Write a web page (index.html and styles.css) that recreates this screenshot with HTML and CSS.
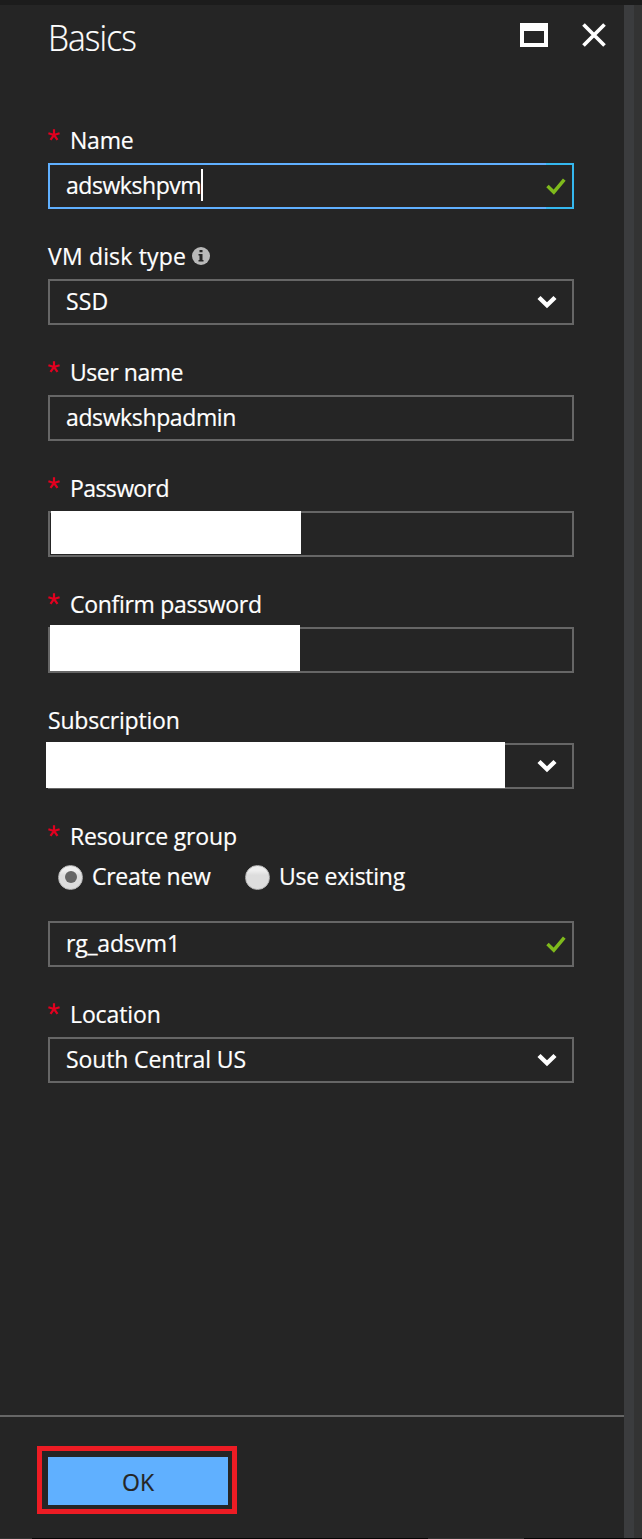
FILE: index.html
```html
<!DOCTYPE html>
<html lang="en">
<head>
<meta charset="utf-8">
<title>Basics</title>
<link rel="stylesheet" href="styles.css">
</head>
<body>
<svg class="defs" width="0" height="0">
  <symbol id="star" viewBox="0 0 12 12"><path d="M6 6V0.2M6 6L0.4 4.2M6 6L11.6 4.2M6 6L2.5 10.8M6 6L9.5 10.8" fill="none" stroke="#e2001f" stroke-width="2.2"/></symbol>
  <symbol id="check" viewBox="0 0 20 17"><path d="M1.5 8L7.8 14.2L18.3 1.7" fill="none" stroke="#7fba1c" stroke-width="3.5"/></symbol>
  <symbol id="chevron" viewBox="0 0 20 14"><path d="M2 2.5L10 10.3L18 2.5" fill="none" stroke="#fff" stroke-width="4.4"/></symbol>
</svg>
<div class="page">
  <div class="topbar"></div>
  <div class="main">
    <section class="blade">
      <header class="header">
        <h1 class="title">Basics</h1>
        <div class="actions">
          <svg width="28" height="24" viewBox="0 0 28 24"><path d="M0 0H28V24H0ZM4 8V20H24V8Z" fill="#fff" fill-rule="evenodd"/></svg>
          <svg width="24" height="24" viewBox="0 0 24 24"><path d="M1.5 1.5L22.5 22.5M22.5 1.5L1.5 22.5" stroke="#fff" stroke-width="3.7"/></svg>
        </div>
      </header>
      <form class="form">
        <div class="group">
          <div class="label"><svg class="star"><use href="#star"/></svg><span class="t-name">Name</span></div>
          <div class="field focused"><span class="t-vm">adswkshpvm</span><i class="caret"></i><svg class="check"><use href="#check"/></svg></div>
        </div>
        <div class="group">
          <div class="label"><span class="t-disk">VM disk type</span><svg class="info" viewBox="0 0 18 18"><circle cx="9" cy="9" r="9" fill="#b9b9b9"/><path d="M7.5 3h3v2.3h-3zM6.5 7h4v6h1v1.5h-5V13h1V8.5h-1z" fill="#252525"/></svg></div>
          <div class="field"><span class="t-ssd">SSD</span><svg class="chevron"><use href="#chevron"/></svg></div>
        </div>
        <div class="group">
          <div class="label"><svg class="star"><use href="#star"/></svg><span class="t-user">User name</span></div>
          <div class="field"><span class="t-admin">adswkshpadmin</span></div>
        </div>
        <div class="group">
          <div class="label"><svg class="star"><use href="#star"/></svg><span class="t-pass">Password</span></div>
          <div class="field"><i class="mask mask-password"></i></div>
        </div>
        <div class="group">
          <div class="label"><svg class="star"><use href="#star"/></svg><span class="t-confirm">Confirm password</span></div>
          <div class="field"><i class="mask mask-confirm"></i></div>
        </div>
        <div class="group">
          <div class="label"><span class="t-sub">Subscription</span></div>
          <div class="field"><i class="mask mask-subscription"></i><svg class="chevron"><use href="#chevron"/></svg></div>
        </div>
        <div class="group">
          <div class="label"><svg class="star"><use href="#star"/></svg><span class="t-group">Resource group</span></div>
          <div class="radios">
            <span class="radio selected"></span><span class="option t-create">Create new</span>
            <span class="radio"></span><span class="option t-existing">Use existing</span>
          </div>
          <div class="field"><span class="t-rg">rg_adsvm1</span><svg class="check"><use href="#check"/></svg></div>
        </div>
        <div class="group">
          <div class="label"><svg class="star"><use href="#star"/></svg><span class="t-loc">Location</span></div>
          <div class="field"><span class="t-south">South Central US</span><svg class="chevron"><use href="#chevron"/></svg></div>
        </div>
      </form>
      <footer class="footer">
        <div class="highlight"><button class="ok">OK</button></div>
      </footer>
    </section>
    <div class="divider"></div>
    <div class="gutter"></div>
  </div>
  <div class="bottombar"></div>
</div>
</body>
</html>
```

FILE: styles.css
```css
* { box-sizing: border-box; }
body { margin: 0; background: #252525; color: #fff; font-family: "Open Sans", "Noto Sans", sans-serif; font-size: 23px; line-height: 32px; -webkit-text-stroke: 0.2px; }
svg { display: block; flex: none; }
.defs { position: absolute; }
.page { width: 642px; height: 1539px; display: flex; flex-direction: column; overflow: hidden; }
.topbar { height: 5px; background: #1c1c1c; }
.main { flex: 1; display: flex; min-height: 0; }
.blade { width: 624px; display: flex; flex-direction: column; background: #252525; }
.divider { width: 10px; background: #3b3c3e; }
.gutter { width: 8px; background: #333; }
.bottombar { height: 1px; background: linear-gradient(90deg, #333 32px, #050505 32px 428px, #333 428px 524px, #050505 524px); }
.header { height: 119px; padding: 8px 18px 0 48px; display: flex; justify-content: space-between; }
.title { margin: 0; font-size: 36px; line-height: 50px; font-weight: 300; letter-spacing: -1px; transform: scaleX(0.93); transform-origin: left; }
.actions { display: flex; gap: 34px; padding-top: 10px; }
.form { flex: 1; padding: 0 50px 0 48px; }
.group { margin-bottom: 31px; }
.label { height: 32px; margin-bottom: 7px; display: flex; align-items: flex-start; white-space: nowrap; }
.star { width: 12px; height: 12px; margin: 5px 10px 0 0; }
.info { width: 18px; height: 18px; margin: 7px 0 0 6px; }
.field { position: relative; height: 46px; border: 2px solid #666; padding: 0 6px 0 16px; display: flex; align-items: center; white-space: nowrap; }
.field > span { padding-bottom: 2px; }
.field.focused { border-image: linear-gradient(90deg, #60b0ff 498px, #35b8ef 498px) 2; }
.caret { width: 2px; height: 32px; margin-bottom: 2px; background: #fff; }
.check { width: 20px; height: 17px; margin-left: auto; }
.chevron { width: 20px; height: 14px; margin: 0 9px 0 auto; }
.mask { position: absolute; background: #fff; }
.mask-password { left: 1px; top: -2px; width: 250px; height: 43px; }
.mask-confirm { left: 0; top: -4px; width: 250px; height: 46px; }
.mask-subscription { left: -4px; top: -3px; width: 459px; height: 46px; }
.radios { height: 32px; margin: 0 0 28px; padding-left: 10px; display: flex; align-items: center; white-space: nowrap; }
.label:has(+ .radios) { margin-bottom: 9px; }
.radio { width: 25px; height: 25px; flex: none; border-radius: 50%; border: 1px solid #b8b8b8; background: linear-gradient(#eee 0 20%, #ddd 40%); display: flex; align-items: center; justify-content: center; }
.radio.selected::after { content: ""; width: 12px; height: 12px; border-radius: 50%; background: #666; }
.option { margin-left: 9px; padding-bottom: 2px; }
.t-name { letter-spacing: -0.2px; }
.t-vm { letter-spacing: -0.45px; }
.t-disk { letter-spacing: 0.17px; }
.t-ssd { letter-spacing: 0.2px; }
.t-user { letter-spacing: -0.45px; }
.t-admin { letter-spacing: -0.38px; }
.t-pass { letter-spacing: -0.6px; }
.t-confirm { letter-spacing: -0.3px; }
.t-sub { letter-spacing: -0.2px; }
.t-group { letter-spacing: -0.17px; }
.t-create { width: 153px; letter-spacing: -0.3px; }
.t-existing { letter-spacing: -0.25px; }
.t-rg { letter-spacing: -0.2px; }
.t-loc { letter-spacing: -0.12px; }
.t-south { letter-spacing: -0.12px; }
.footer { height: 123px; border-top: 2px solid #666; padding: 29px 0 0 37px; }
.highlight { width: 200px; height: 68px; border: 5px solid #ed1c24; padding: 6px; }
.ok { display: block; width: 180px; height: 48px; border: 0; padding: 1px 0 0; background: #60b0ff; color: #252525; font: inherit; }
```
